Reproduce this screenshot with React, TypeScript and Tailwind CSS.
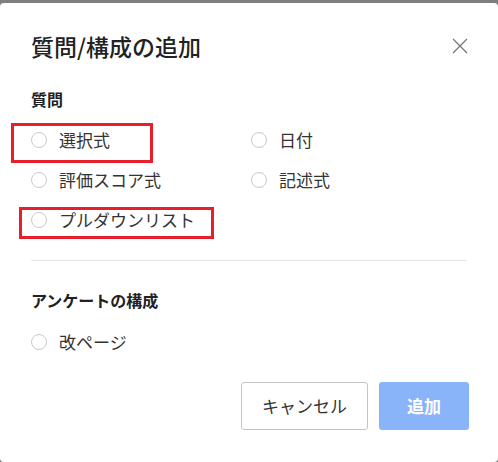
import { useState } from "react";

type Option = { id: string; label: string };

const QUESTION_OPTIONS: Option[][] = [
  [
    { id: "choice", label: "選択式" },
    { id: "date", label: "日付" },
  ],
  [
    { id: "rating", label: "評価スコア式" },
    { id: "text", label: "記述式" },
  ],
  [{ id: "pulldown", label: "プルダウンリスト" }],
];

function Radio({
  label,
  checked,
  onClick,
}: {
  label: string;
  checked: boolean;
  onClick: () => void;
}) {
  return (
    <button onClick={onClick} className="flex items-center gap-[12px] h-[40px] text-left">
      <span
        className={`w-[16px] h-[16px] rounded-full border ${
          checked ? "border-[#4a86f0] border-[5px]" : "border-[#c9c9c9]"
        } bg-white shrink-0`}
      />
      <span className="text-[17px] leading-[24px] text-[#333]">{label}</span>
    </button>
  );
}

export default function App() {
  const [selected, setSelected] = useState<string | null>(null);

  return (
    <div className="h-[462px] bg-[#7f7f7f] pt-[3px] font-['Noto_Sans_CJK_JP','Noto_Sans',sans-serif]">
      <div className="relative h-full bg-white rounded-[4px] px-[31px] pt-[27px]">
        {/* ヘッダー */}
        <div className="flex items-center justify-between h-[32px]">
          <h1 className="text-[23px] leading-[32px] font-medium text-[#222]">質問/構成の追加</h1>
          <button className="w-[16px] h-[16px] mr-[-1px]" aria-label="閉じる">
            <svg viewBox="0 0 16 16" width="16" height="16" fill="none" stroke="#777" strokeWidth="1.3">
              <path d="M1 1 L15 15 M15 1 L1 15" />
            </svg>
          </button>
        </div>

        {/* 質問 */}
        <p className="mt-[25px] text-[16px] leading-[24px] font-bold text-[#222]">質問</p>
        <div className="mt-[9px]">
          {QUESTION_OPTIONS.map((row, i) => (
            <div key={i} className="grid grid-cols-[220px_1fr]">
              {row.map((opt) => (
                <Radio
                  key={opt.id}
                  label={opt.label}
                  checked={selected === opt.id}
                  onClick={() => setSelected(opt.id)}
                />
              ))}
            </div>
          ))}
        </div>

        <div className="mt-[20px] border-t border-[#e6e6e6]" />

        {/* アンケートの構成 */}
        <p className="mt-[27px] text-[16px] leading-[24px] font-bold text-[#222]">アンケートの構成</p>
        <div className="mt-[10px]">
          <Radio label="改ページ" checked={selected === "page"} onClick={() => setSelected("page")} />
        </div>

        <div className="mt-[20px] flex justify-end gap-[11px] mr-[-2px]">
          <button className="w-[127px] h-[48px] border border-[#c4c4c4] rounded-[3px] text-[17px] text-[#333] bg-white">
            キャンセル
          </button>
          <button className="w-[90px] h-[48px] rounded-[3px] bg-[#8ab4fa] text-[17px] font-bold text-white">
            追加
          </button>
        </div>

        {/* 注釈の赤枠 */}
        <div className="absolute left-[11px] top-[120px] w-[142px] h-[40px] border-[3px] border-[#e5202a] pointer-events-none" />
        <div className="absolute left-[19px] top-[204px] w-[195px] h-[32px] border-[3px] border-[#e5202a] pointer-events-none" />
      </div>
    </div>
  );
}
